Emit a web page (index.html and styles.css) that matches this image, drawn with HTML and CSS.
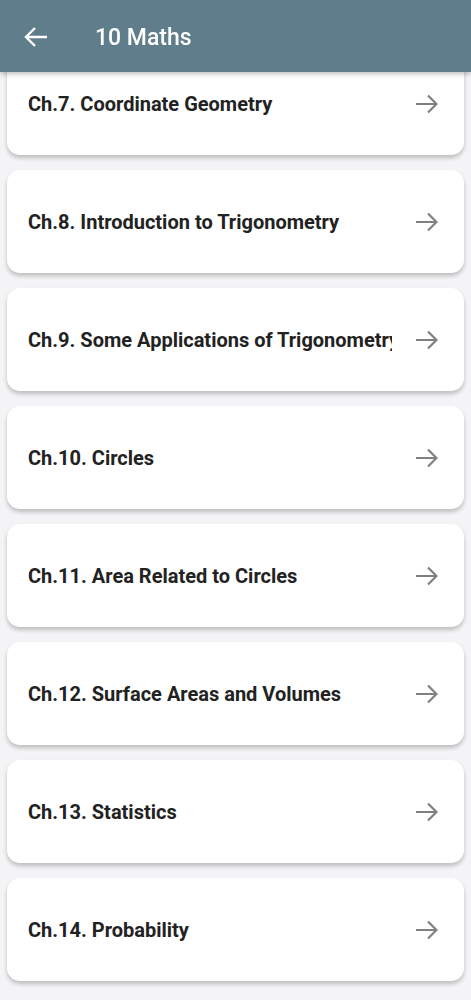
FILE: index.html
```html
<!DOCTYPE html>
<html lang="en">
<head>
    <meta charset="UTF-8">
    <meta name="viewport" content="width=device-width, initial-scale=1.0">
    <title>10 Maths</title>
    <link rel="stylesheet" href="styles.css">
</head>
<body>
    <div class="app-bar">
        <svg class="back-btn" width="24" height="20" viewBox="0 0 24 20">
            <path d="M23 10H2M11 1L2 10l9 9" fill="none" stroke="#fff" stroke-width="2.4"/>
        </svg>
        <div class="app-title">10 Maths</div>
    </div>
    <div class="chapter-list">
        <div class="chapter-card">
            <div class="chapter-name">Ch.7. Coordinate Geometry</div>
            <svg class="chapter-arrow" width="22" height="20" viewBox="0 0 22 20"><path d="M0 10h20.5M12 1.5l8.5 8.5-8.5 8.5" fill="none" stroke="#808080" stroke-width="2.2"/></svg>
        </div>
        <div class="chapter-card">
            <div class="chapter-name">Ch.8. Introduction to Trigonometry</div>
            <svg class="chapter-arrow" width="22" height="20" viewBox="0 0 22 20"><path d="M0 10h20.5M12 1.5l8.5 8.5-8.5 8.5" fill="none" stroke="#808080" stroke-width="2.2"/></svg>
        </div>
        <div class="chapter-card">
            <div class="chapter-name">Ch.9. Some Applications of Trigonometry</div>
            <svg class="chapter-arrow" width="22" height="20" viewBox="0 0 22 20"><path d="M0 10h20.5M12 1.5l8.5 8.5-8.5 8.5" fill="none" stroke="#808080" stroke-width="2.2"/></svg>
        </div>
        <div class="chapter-card">
            <div class="chapter-name">Ch.10. Circles</div>
            <svg class="chapter-arrow" width="22" height="20" viewBox="0 0 22 20"><path d="M0 10h20.5M12 1.5l8.5 8.5-8.5 8.5" fill="none" stroke="#808080" stroke-width="2.2"/></svg>
        </div>
        <div class="chapter-card">
            <div class="chapter-name">Ch.11. Area Related to Circles</div>
            <svg class="chapter-arrow" width="22" height="20" viewBox="0 0 22 20"><path d="M0 10h20.5M12 1.5l8.5 8.5-8.5 8.5" fill="none" stroke="#808080" stroke-width="2.2"/></svg>
        </div>
        <div class="chapter-card">
            <div class="chapter-name">Ch.12. Surface Areas and Volumes</div>
            <svg class="chapter-arrow" width="22" height="20" viewBox="0 0 22 20"><path d="M0 10h20.5M12 1.5l8.5 8.5-8.5 8.5" fill="none" stroke="#808080" stroke-width="2.2"/></svg>
        </div>
        <div class="chapter-card">
            <div class="chapter-name">Ch.13. Statistics</div>
            <svg class="chapter-arrow" width="22" height="20" viewBox="0 0 22 20"><path d="M0 10h20.5M12 1.5l8.5 8.5-8.5 8.5" fill="none" stroke="#808080" stroke-width="2.2"/></svg>
        </div>
        <div class="chapter-card">
            <div class="chapter-name">Ch.14. Probability</div>
            <svg class="chapter-arrow" width="22" height="20" viewBox="0 0 22 20"><path d="M0 10h20.5M12 1.5l8.5 8.5-8.5 8.5" fill="none" stroke="#808080" stroke-width="2.2"/></svg>
        </div>
    </div>
</body>
</html>
```

FILE: styles.css
```css
body{
    margin: 0;
    background: #f4f3f5;
    font-family: Roboto, "Liberation Sans", sans-serif;
}
.app-bar{
    position: fixed;
    top: 0;
    left: 0;
    right: 0;
    height: 72px;
    background: #607d8b;
    display: flex;
    align-items: center;
    box-shadow: 0 2px 5px rgba(0,0,0,0.25);
    z-index: 2;
}
.back-btn{
    margin: 2px 0 0 24px;
}
.app-title{
    margin: 3px 0 0 47px;
    color: #fff;
    font-size: 23px;
    font-weight: 500;
}
.chapter-list{
    padding: 52px 7px 20px;
    display: flex;
    flex-direction: column;
    gap: 15px;
}
.chapter-card{
    height: 103px;
    background: #fff;
    border-radius: 13px;
    box-shadow: 0 3px 4px rgba(0,0,0,0.22);
    display: flex;
    align-items: center;
    padding: 0 26px 0 21px;
}
.chapter-name{
    flex: 1;
    overflow: hidden;
    white-space: nowrap;
    margin-right: 24px;
    color: #222;
    font-size: 20px;
    font-weight: 700;
}
.chapter-arrow{
    flex: none;
}
```
